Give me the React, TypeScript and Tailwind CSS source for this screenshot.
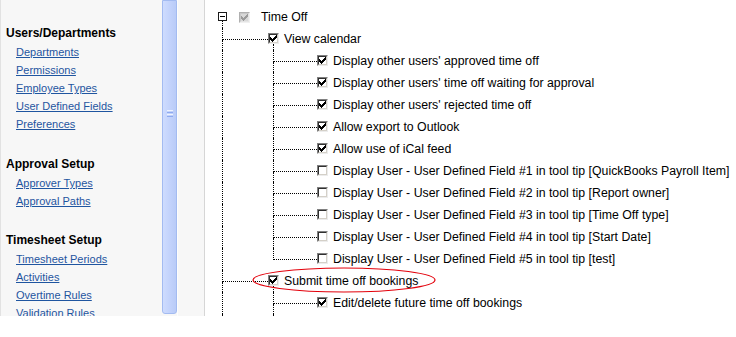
import React from "react";

const CHECK =
  "M6 0h1v1h-1z M5 1h2v1h-2z M0 2h1v1h-1z M4 2h3v1h-3z M0 3h2v1h-2z M3 3h3v1h-3z M0 4h5v1h-5z M1 5h3v1h-3z M2 6h1v1h-1z";

function Box({ checked, disabled }: { checked: boolean; disabled?: boolean }) {
  return (
    <span
      className={
        "flex w-[11px] h-[11px] shrink-0 border " +
        (disabled
          ? "border-t-[#b0b0b0] border-l-[#b0b0b0] border-r-[#f0f0f0] border-b-[#f0f0f0]"
          : "border-t-[#808080] border-l-[#808080] border-r-[#ececec] border-b-[#ececec]")
      }
    >
      <span
        className={
          "flex items-center justify-center w-full h-full border " +
          (disabled
            ? "border-t-[#c8c8c8] border-l-[#c8c8c8] border-r-[#e4e4e4] border-b-[#e4e4e4] bg-[#d8d8d8]"
            : "border-t-[#303030] border-l-[#303030] border-r-[#d4d0c8] border-b-[#d4d0c8] bg-white")
        }
      >
        {checked && (
          <svg width="7" height="7" viewBox="0 0 7 7" shapeRendering="crispEdges">
            <path d={CHECK} fill={disabled ? "#9a9a9a" : "#000"} />
          </svg>
        )}
      </span>
    </span>
  );
}

const dot = "border-dotted border-black";

function BoxCol({
  checked,
  disabled,
  hasChildren,
}: {
  checked: boolean;
  disabled?: boolean;
  hasChildren?: boolean;
}) {
  return (
    <div className="flex flex-col w-[11px] h-full shrink-0">
      <div className="h-[5px]" />
      <Box checked={checked} disabled={disabled} />
      <div className={"flex-1 ml-[5px] " + (hasChildren ? "border-l " + dot : "")} />
    </div>
  );
}

function Connector({ width, last }: { width: string; last?: boolean }) {
  return (
    <div className={"flex flex-col h-full shrink-0 " + width}>
      <div className={"h-[12px] border-l border-b " + dot} />
      <div className={"flex-1 " + (last ? "" : "border-l " + dot)} />
    </div>
  );
}

function Level1({ label, checked, hasChildren }: { label: string; checked: boolean; hasChildren?: boolean }) {
  return (
    <div className="flex h-[22px] items-stretch">
      <div className="w-[17px] shrink-0" />
      <Connector width="w-[46px]" />
      <BoxCol checked={checked} hasChildren={hasChildren} />
      <span className="ml-[5px] self-center whitespace-nowrap">{label}</span>
    </div>
  );
}

function Level2({ label, checked, last }: { label: string; checked: boolean; last?: boolean }) {
  return (
    <div className="flex h-[22px] items-stretch">
      <div className="w-[17px] shrink-0" />
      <div className={"w-[51px] shrink-0 border-l " + dot} />
      <Connector width="w-[44px]" last={last} />
      <BoxCol checked={checked} />
      <span className="ml-[5px] self-center whitespace-nowrap">{label}</span>
    </div>
  );
}

function Section({ title, links, className }: { title: string; links: string[]; className?: string }) {
  return (
    <div className={className}>
      <div className="h-[18px] leading-[18px] text-[12px] font-bold text-black whitespace-nowrap">{title}</div>
      {links.map((l) => (
        <div key={l} className="h-[18px] leading-[18px] pl-[10px] whitespace-nowrap">
          <a className="text-[11px] text-[#1f55a0] underline cursor-pointer">{l}</a>
        </div>
      ))}
    </div>
  );
}

const calendarChildren: [string, boolean][] = [
  ["Display other users' approved time off", true],
  ["Display other users' time off waiting for approval", true],
  ["Display other users' rejected time off", true],
  ["Allow export to Outlook", true],
  ["Allow use of iCal feed", true],
  ["Display User - User Defined Field #1 in tool tip [QuickBooks Payroll Item]", false],
  ["Display User - User Defined Field #2 in tool tip [Report owner]", false],
  ["Display User - User Defined Field #3 in tool tip [Time Off type]", false],
  ["Display User - User Defined Field #4 in tool tip [Start Date]", false],
  ["Display User - User Defined Field #5 in tool tip [test]", false],
];

export default function App() {
  return (
    <div
      className="w-[736px] h-[337px] bg-white overflow-hidden"
      style={{ fontFamily: '"Liberation Sans", Arial, sans-serif' }}
    >
      <div className="flex h-[316px] overflow-hidden">
        {/* Sidebar */}
        <div className="w-[162px] shrink-0 bg-[#f7f7f7] border-l border-[#e2e2e2] pl-[5px] pt-[24px]">
          <Section
            title="Users/Departments"
            links={["Departments", "Permissions", "Employee Types", "User Defined Fields", "Preferences"]}
          />
          <Section className="mt-[23px]" title="Approval Setup" links={["Approver Types", "Approval Paths"]} />
          <Section
            className="mt-[22px]"
            title="Timesheet Setup"
            links={["Timesheet Periods", "Activities", "Overtime Rules", "Validation Rules"]}
          />
        </div>
        {/* Scrollbar thumb */}
        <div className="w-[15px] shrink-0 bg-[#f7f7f7] flex flex-col">
          <div className="flex-1 mb-[2px] rounded-b-[3px] border border-[#a3bbf1] bg-gradient-to-r from-[#cedcfe] via-[#c3d3fc] to-[#b9cbf7] flex flex-col items-center pt-[109px]">
            <div className="flex flex-col gap-[1px]">
              <div className="w-[6px] h-[1px] bg-[#eef3fe]" />
              <div className="w-[6px] h-[1px] bg-[#8eaaf0]" />
              <div className="w-[6px] h-[1px] bg-[#eef3fe]" />
              <div className="w-[6px] h-[1px] bg-[#8eaaf0]" />
            </div>
          </div>
        </div>
        <div className="w-[28px] shrink-0 bg-[#f7f7f7] border-l border-l-[#fdfdfd] border-r border-r-[#d6d6d6]" />
        {/* Tree */}
        <div className="relative flex-1 bg-white pt-[6px] text-[12.3px] text-black overflow-hidden">
          <div className="flex h-[22px] items-stretch">
            <div className="w-[13px] shrink-0" />
            <div className="flex flex-col w-[9px] h-full shrink-0">
              <div className="h-[6px]" />
              <div className="w-[9px] h-[9px] border border-[#1a1a1a] bg-white flex items-center justify-center">
                <div className="w-[5px] h-[1px] bg-black" />
              </div>
              <div className={"flex-1 ml-[4px] border-l " + dot} />
            </div>
            <div className="w-[12px] shrink-0" />
            <div className="flex flex-col w-[11px] h-full shrink-0">
              <div className="h-[6px]" />
              <Box checked disabled />
            </div>
            <span className="ml-[11px] self-center">Time Off</span>
          </div>
          <Level1 label="View calendar" checked hasChildren />
          {calendarChildren.map(([l, c], i) => (
            <Level2 key={l} label={l} checked={c} last={i === calendarChildren.length - 1} />
          ))}
          <Level1 label="Submit time off bookings" checked hasChildren />
          <Level2 label="Edit/delete future time off bookings" checked />
          <div className="flex h-[22px] items-stretch">
            <div className="w-[17px] shrink-0" />
            <div className={"w-[51px] shrink-0 border-l " + dot} />
            <div className={"w-[44px] shrink-0 border-l " + dot} />
          </div>
          <svg
            className="absolute left-[46px] top-[266px]"
            width="188"
            height="28"
            viewBox="0 0 188 28"
          >
            <ellipse cx="93" cy="14" rx="91" ry="12" fill="none" stroke="#e3000b" strokeWidth="1.2" />
          </svg>
        </div>
      </div>
    </div>
  );
}
